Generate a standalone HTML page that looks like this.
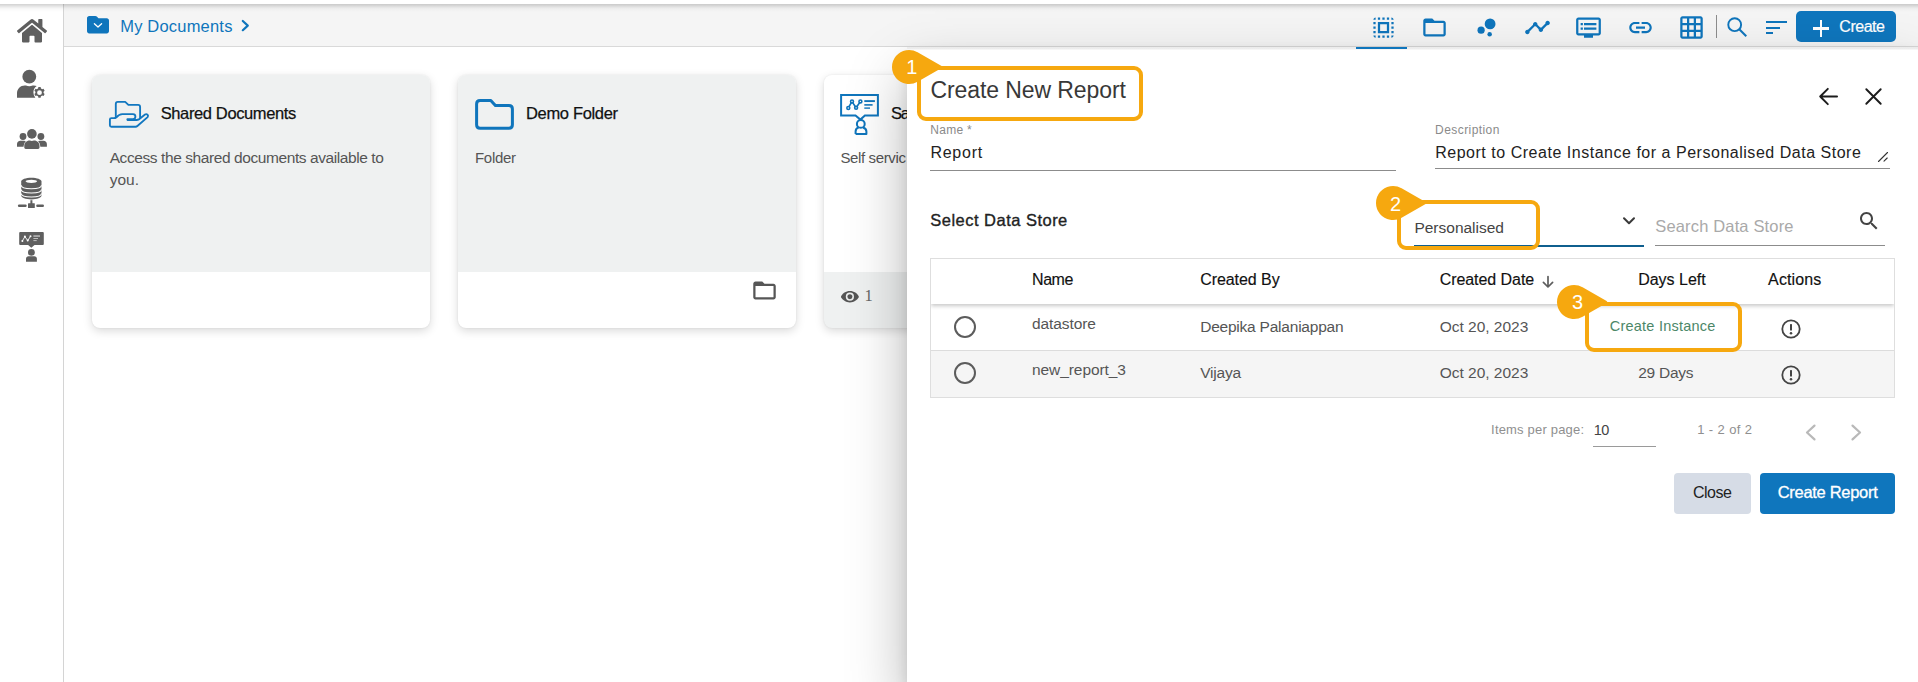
<!DOCTYPE html>
<html lang="en">
<head>
<meta charset="utf-8">
<title>My Documents - Create New Report</title>
<style>
*{box-sizing:border-box;margin:0;padding:0}
html,body{width:1918px;height:682px;overflow:hidden;background:#fff}
body{font-family:"Liberation Sans",sans-serif;color:#222;position:relative}
.abs{position:absolute}
svg{position:absolute;overflow:visible}
.t{position:absolute;white-space:pre;line-height:1}
#sidebar{position:absolute;left:0;top:4px;width:64px;height:678px;background:#fff;border-right:1px solid #d4d4d4}
#topbar{position:absolute;left:64px;top:4px;width:1854px;height:43px;background:#f5f5f5;border-bottom:1px solid #d9d9d9}
#toolbar{position:absolute;left:1346px;top:4px;width:572px;height:42px;background:linear-gradient(#f5f5f5 15%,#e9e9e9)}
#topshadow{position:absolute;left:0;top:4px;width:1918px;height:9px;background:linear-gradient(rgba(0,0,0,.165) 0,rgba(0,0,0,.16) .5px,rgba(0,0,0,.13) 1.5px,rgba(0,0,0,.094) 2.5px,rgba(0,0,0,.061) 3.5px,rgba(0,0,0,.037) 4.5px,rgba(0,0,0,.02) 5.5px,rgba(0,0,0,.012) 6.5px,rgba(0,0,0,.004) 7.5px,rgba(0,0,0,0) 9px)}
#tabline{position:absolute;left:1356px;top:46.700px;width:51px;height:2.300px;background:#0f75bc}
.card{position:absolute;top:75px;width:338px;height:253px;border-radius:8px;background:#fff;box-shadow:0 3px 10px rgba(0,0,0,.15),0 0 2px rgba(0,0,0,.08);overflow:hidden}
.card .top{position:absolute;left:0;top:0;width:100%;height:197px;background:#eff1f1}
.card.inv .top{background:#fff}
.card.inv{background:#eff1f1}
#panel{position:absolute;left:907px;top:47px;width:1011px;height:635px;background:#fff;box-shadow:0 28px 56px rgba(0,0,0,.29),0 6px 12px rgba(0,0,0,.1);clip-path:inset(-60px 0 0 -63px)}
.hl{position:absolute;border:4px solid #f6a80f;border-radius:9px}
.line{position:absolute;height:1px;background:#8c8c8c}
.btn{position:absolute;border-radius:4px;height:41px;top:473px}
#tbl{position:absolute;left:930px;top:258px;width:965px;height:140px;border:1px solid #dedede;background:#fff}
#thead{position:absolute;left:931px;top:259px;width:963px;height:45px;background:#fff;box-shadow:0 2px 4px rgba(0,0,0,.22);clip-path:inset(0 0 -12px 0)}
#row2{position:absolute;left:931px;top:351px;width:963px;height:46px;background:#f5f5f5}
#rowline{position:absolute;left:931px;top:350px;width:963px;height:1px;background:#dcdcdc}
.num{width:24px;text-align:center;font-size:20px;color:#fff}
.radio{position:absolute;width:22px;height:22px;border:2px solid #5c5c5c;border-radius:50%;background:transparent}
</style>
</head>
<body>
<div id="sidebar"></div>
<div id="topbar"></div>
<div id="topshadow"></div>
<svg style="left:0;top:0" width="64" height="280" viewBox="0 0 64 280" fill="#5f5f5f">
<!-- home -->
<g transform="translate(17,17.4) scale(0.0521)"><path d="M280.37 148.26L96 300.11V464a16 16 0 0 0 16 16l112.06-.29a16 16 0 0 0 15.92-16V368a16 16 0 0 1 16-16h64a16 16 0 0 1 16 16v95.64a16 16 0 0 0 16 16.050L464 480a16 16 0 0 0 16-16V300L295.670 148.260a12.190 12.190 0 0 0-15.300 0zM571.600 251.470L488 182.560V44.050a12 12 0 0 0-12-12h-56a12 12 0 0 0-12 12v72.610L318.470 43a48 48 0 0 0-61 0L4.340 251.470a12 12 0 0 0-1.600 16.900l25.500 31A12 12 0 0 0 45.150 301l235.220-193.740a12.190 12.190 0 0 1 15.300 0L530.900 301a12 12 0 0 0 16.900-1.600l25.500-31a12 12 0 0 0-1.700-16.930z"/></g>
<!-- user cog -->
<circle cx="29.3" cy="76.7" r="6.9"/>
<path d="M17 97.700v-4.500c0-4.400 3.400-7.800 7.800-7.800h1.200c1 .5 2.100 .8 3.300 .8s2.300-.3 3.300-.8h1.200c1 0 2 .2 2.900 .6a8 8 0 0 0-3.300 6.500 8 8 0 0 0 1.900 5.200z"/>
<g transform="translate(39.500,92.700)"><path fill-rule="evenodd" d="M-1.100-5.600h2.200l.35 1.450a4.300 4.300 0 0 1 1.150 .66l1.430-.42 1.100 1.900-1.080 1.030a4.300 4.300 0 0 1 0 1.320l1.080 1.030-1.100 1.900-1.430-.42a4.300 4.300 0 0 1-1.150 .66l-.35 1.450h-2.200l-.35-1.450a4.300 4.300 0 0 1-1.150-.66l-1.430 .42-1.100-1.900 1.080-1.030a4.300 4.300 0 0 1 0-1.320l-1.080-1.030 1.100-1.900 1.430 .42a4.300 4.300 0 0 1 1.150-.66zM0-2.400a2.400 2.400 0 1 0 0 4.800 2.400 2.400 0 0 0 0-4.800z"/></g>
<!-- users -->
<circle cx="31.900" cy="133.900" r="4.800"/><circle cx="23" cy="136.500" r="3.400"/><circle cx="40.900" cy="136.500" r="3.400"/>
<path d="M17 146.800v-2.600c0-1.900 1.500-3.400 3.400-3.400h3.700c.6 0 1.200 .2 1.700 .5a6.400 6.400 0 0 0-2.200 4.800v.7zM46.900 146.800v-2.600c0-1.900-1.500-3.400-3.400-3.400h-3.700c-.6 0-1.200 .2-1.700 .5a6.400 6.400 0 0 1 2.200 4.800v.7z"/>
<path d="M24.300 147.500v-1.700c0-3 2.300-5.300 5.300-5.300h.3c.6 .3 1.300 .5 2 .5s1.400-.2 2-.5h.3c3 0 5.300 2.300 5.300 5.300v1.700c0 .8-.6 1.400-1.400 1.400h-12.400c-.8 0-1.400-.6-1.400-1.400z"/>
<!-- database -->
<path d="M21.200 181.600c0-2.100 4.500-3.800 10.150-3.800s10.150 1.700 10.150 3.800v14c0 2.100-4.500 3.800-10.150 3.800s-10.150-1.700-10.150-3.800z"/>
<ellipse cx="31.350" cy="181.300" rx="5.800" ry="1.600" fill="#fff"/>
<g fill="none" stroke="#fff" stroke-width="1.100"><path d="M21.200 185.200c0 2.100 4.500 3.500 10.150 3.500s10.150-1.400 10.150-3.500"/><path d="M21.200 189.500c0 2.100 4.500 3.500 10.150 3.500s10.150-1.400 10.150-3.500"/><path d="M21.200 193.500c0 2.100 4.500 3.500 10.150 3.500s10.150-1.400 10.150-3.500"/></g>
<rect x="30.400" y="200.200" width="2" height="4" /><rect x="28" y="203.200" width="6.800" height="4.700" rx=".5"/>
<rect x="17.900" y="204.500" width="8.800" height="2.400" rx="1.200"/><rect x="36.200" y="204.500" width="7.800" height="2.400" rx="1.200"/>
<!-- presenter -->
<path d="M19.200 231.900h23.600a1 1 0 0 1 1 1v11a1 1 0 0 1-1 1h-8.300l-3.200 2.900-3.200-2.900h-7.900a1 1 0 0 1-1-1v-11a1 1 0 0 1 1-1z"/>
<g fill="none" stroke="#fff" stroke-width=".9"><path d="M22.400 240.900l2.500-4.300 2.800 4 2.800-4.300"/></g>
<g fill="#fff"><circle cx="22.400" cy="240.900" r="1"/><circle cx="24.900" cy="236.600" r="1"/><circle cx="27.700" cy="240.600" r="1"/><circle cx="30.500" cy="236.300" r="1"/></g>
<g fill="#bdbdbd"><rect x="33.400" y="235.300" width="6.600" height="1.500"/><rect x="33.400" y="238" width="4.600" height="1"/><rect x="33.400" y="240.100" width="3.300" height="1"/></g>
<circle cx="31.400" cy="252.400" r="3.400"/>
<path d="M26 261.800v-3c0-1.400 1.100-2.500 2.500-2.500h5.900c1.400 0 2.500 1.100 2.500 2.500v3z"/>
</svg>

<!-- breadcrumb folder -->
<svg style="left:87px;top:15.800px" width="22" height="17.400" viewBox="0 0 22 17.400"><path d="M2.200 0h6.100c.6 0 1.100 .2 1.500 .6l1.700 1.700h8.300c1.200 0 2.200 1 2.200 2.200v10.700c0 1.200-1 2.200-2.200 2.200H2.200c-1.200 0-2.200-1-2.200-2.200V2.200C0 1 1 0 2.200 0z" fill="#0f75bc"/><path d="M7.400 7.700l3.600 3.300 3.600-3.300" fill="none" stroke="#fff" stroke-width="1.300" stroke-linecap="round" stroke-linejoin="round"/></svg>
<svg style="left:240px;top:19px" width="11" height="14" viewBox="0 0 11 14" fill="none" stroke="#0f75bc" stroke-width="2.200" stroke-linecap="round" stroke-linejoin="round"><path d="M2.800 2l5 4.600-5 4.600"/></svg>
<!-- toolbar icons 27px -->
<svg style="left:1369.500px;top:14px" width="27" height="27" viewBox="0 0 24 24" fill="#0f75bc"><path d="M3 5h2V3c-1.100 0-2 .9-2 2zm0 8h2v-2H3v2zm4 8h2v-2H7v2zM3 9h2V7H3v2zm10-6h-2v2h2V3zm6 0v2h2c0-1.100-.9-2-2-2zM5 21v-2H3c0 1.100 .9 2 2 2zm-2-4h2v-2H3v2zM9 3H7v2h2V3zm2 18h2v-2h-2v2zm8-8h2v-2h-2v2zm0 8c1.100 0 2-.9 2-2h-2v2zm0-12h2V7h-2v2zm0 8h2v-2h-2v2zm-4 4h2v-2h-2v2zm0-16h2V3h-2v2zM7 17h10V7H7v10zm2-8h6v6H9V9z"/></svg>
<svg style="left:1421px;top:13.800px" width="27" height="27" viewBox="0 0 24 24" fill="#0f75bc"><path d="M20 6h-8l-2-2H4c-1.100 0-1.990 .9-1.990 2L2 18c0 1.100 .9 2 2 2h16c1.100 0 2-.9 2-2V8c0-1.100-.9-2-2-2zm0 12H4V8h16v10z"/></svg>
<svg style="left:1472.500px;top:13.800px" width="27" height="27" viewBox="0 0 24 24" fill="#0f75bc"><circle cx="7.200" cy="14.400" r="3.200"/><circle cx="14.800" cy="18" r="2"/><circle cx="15.200" cy="8.800" r="4.800"/></svg>
<svg style="left:1523.800px;top:13.800px" width="27" height="27" viewBox="0 0 24 24" fill="#0f75bc"><path d="M23 8c0 1.100-.9 2-2 2-.18 0-.35-.02-.51-.07l-3.560 3.550c.05 .16 .07 .34 .07 .52 0 1.100-.9 2-2 2s-2-.9-2-2c0-.18 .02-.36 .07-.52l-2.550-2.550c-.16 .05-.34 .07-.52 .07s-.36-.02-.52-.07l-4.550 4.560c.05 .16 .07 .33 .07 .51 0 1.100-.9 2-2 2s-2-.9-2-2 .9-2 2-2c.18 0 .35 .02 .51 .07l4.560-4.550C8.020 9.360 8 9.180 8 9c0-1.100 .9-2 2-2s2 .9 2 2c0 .18-.02 .36-.07 .52l2.550 2.550c.16-.05 .34-.07 .52-.07s.36 .02 .52 .07l3.550-3.560C19.020 8.350 19 8.180 19 8c0-1.100 .9-2 2-2s2 .9 2 2z"/></svg>
<svg style="left:1575.400px;top:13.800px" width="27" height="27" viewBox="0 0 24 24" fill="#0f75bc"><path d="M21 3H3c-1.100 0-2 .9-2 2v12c0 1.100 .9 2 2 2h5v2h8v-2h5c1.100 0 1.990-.9 1.990-2L23 5c0-1.100-.9-2-2-2zm0 14H3V5h18v12zm-2-9H8v2h11V8zm0 4H8v2h11v-2zM7 8H5v2h2V8zm0 4H5v2h2v-2z"/></svg>
<svg style="left:1626.800px;top:13.800px" width="27" height="27" viewBox="0 0 24 24" fill="#0f75bc"><path d="M3.900 12c0-1.710 1.390-3.100 3.100-3.100h4V7H7c-2.760 0-5 2.240-5 5s2.240 5 5 5h4v-1.900H7c-1.710 0-3.100-1.390-3.100-3.100zM8 13h8v-2H8v2zm9-6h-4v1.900h4c1.710 0 3.100 1.390 3.100 3.100s-1.390 3.100-3.100 3.100h-4V17h4c2.760 0 5-2.240 5-5s-2.240-5-5-5z"/></svg>
<svg style="left:1678.300px;top:14px" width="27" height="27" viewBox="0 0 24 24" fill="#0f75bc"><path d="M20 2H4c-1.100 0-2 .9-2 2v16c0 1.100 .9 2 2 2h16c1.100 0 2-.9 2-2V4c0-1.100-.9-2-2-2zM8 20H4v-4h4v4zm0-6H4v-4h4v4zm0-6H4V4h4v4zm6 12h-4v-4h4v4zm0-6h-4v-4h4v4zm0-6h-4V4h4v4zm6 12h-4v-4h4v4zm0-6h-4v-4h4v4zm0-6h-4V4h4v4z"/></svg>
<div class="abs" style="left:1716px;top:15px;width:1px;height:23px;background:#8d8d8d"></div>
<svg style="left:1723.800px;top:13.900px" width="27" height="27" viewBox="0 0 24 24" fill="none" stroke="#0f75bc"><circle cx="9.500" cy="9.500" r="5.700" stroke-width="1.700"/><path d="M13.800 13.800l6 6" stroke-width="1.800"/></svg>
<div class="abs" style="left:1766.400px;top:21px;width:20.800px;height:2px;background:#0f75bc"></div>
<div class="abs" style="left:1766.400px;top:26.500px;width:13.700px;height:2px;background:#0f75bc"></div>
<div class="abs" style="left:1766.400px;top:32px;width:6.900px;height:2px;background:#0f75bc"></div>
<div class="abs" style="left:1796px;top:11px;width:100px;height:31px;border-radius:5px;background:#0f76bd"></div>
<div class="abs" style="left:1812.900px;top:27px;width:16.500px;height:2.700px;background:#fff"></div>
<div class="abs" style="left:1819.800px;top:20.200px;width:2.700px;height:16.500px;background:#fff"></div>


<!-- cards -->
<div class="card" style="left:92px"><div class="top"></div></div>
<div class="card" style="left:458px"><div class="top"></div></div>
<div class="card inv" style="left:824px"><div class="top"></div></div>
<!-- card 1: shared documents (hand + folder) -->
<svg style="left:100px;top:92px" width="60" height="45" viewBox="0 0 60 45" fill="none" stroke="#1177c0" stroke-width="1.850" stroke-linecap="round" stroke-linejoin="round">
<path d="M15.800 24.800V11.900Q15.800 9.900 17.800 9.900H25.200L28.400 12.900H38.100Q40.100 12.900 40.100 14.900V25.400"/>
<path d="M14.900 26.100H11.400Q9.900 26.100 9.900 27.600V33.200Q9.900 34.700 11.400 34.700H35.600Q36.600 34.700 37.400 34L47.600 25.100Q48.600 23.900 47.500 22.700Q46.300 21.600 45 22.600L38.800 27.400Q37.800 28 36.600 28H27.600"/>
<path d="M14.900 26.100Q15.700 26.100 16.400 25.400Q19 22.100 22.300 22.100H33Q35.400 22.100 35.400 24.600Q35.400 27.200 33 27.200H27.400"/>
</svg>
<!-- card 2: folder -->
<svg style="left:466px;top:92px" width="60" height="45" viewBox="466 92 60 45" fill="none" stroke="#0f75bc" stroke-width="3" stroke-linejoin="round">
<path d="M480.100 100.400H490.800L495.400 105.600H508.900Q512.400 105.600 512.400 109.100V124.800Q512.400 128.300 508.900 128.300H480.100Q476.600 128.300 476.600 124.800V103.900Q476.600 100.400 480.100 100.400Z"/>
</svg>
<svg style="left:751px;top:276.500px" width="27" height="27" viewBox="0 0 24 24" fill="#565656"><path d="M20 6h-8l-2-2H4c-1.100 0-1.990 .9-1.990 2L2 18c0 1.100 .9 2 2 2h16c1.100 0 2-.9 2-2V8c0-1.100-.9-2-2-2zm0 12H4V8h16v10z"/></svg>
<!-- card 3: presenter -->
<svg style="left:830px;top:86px" width="60" height="60" viewBox="830 86 60 60" fill="none" stroke="#0f75bc" stroke-width="2" stroke-linejoin="miter">
<path d="M855.500 115.400H841.100V94.900H877.900V115.400H864.900L860.400 119.600Z"/>
<circle cx="860.800" cy="123.900" r="3.900"/>
<path d="M855.600 133.900V131.600C855.600 129.200 857.200 127.900 858.600 127.500M863 127.500C864.500 127.900 866.400 129.200 866.400 131.600V133.900H855.600" stroke-linejoin="round"/>
<g stroke-width="1.600"><path d="M848.900 106.900L851.400 102.500M852.700 102.600L855.400 106.700M856.800 106.700L859.700 102.500"/><circle cx="848.300" cy="108" r="1.450"/><circle cx="852" cy="101.400" r="1.450"/><circle cx="856.100" cy="107.800" r="1.450"/><circle cx="860.400" cy="101.400" r="1.450"/></g>
<path stroke-width="1.900" d="M864.300 101.100H874.900"/><path stroke-width="1.600" d="M864.300 104.900H872.600"/><path stroke-width="1.400" d="M864.300 108.100H870"/>
</svg>
<!-- eye -->
<svg style="left:840.500px;top:290.700px" width="17.800" height="11.400" viewBox="0 0 17.800 11.400"><path d="M8.900 0C4.800 0 1.500 2.500 .1 5.200a1.100 1.100 0 0 0 0 1c1.400 2.700 4.700 5.200 8.800 5.200s7.400-2.500 8.800-5.200a1.100 1.100 0 0 0 0-1C16.300 2.500 13 0 8.900 0z" fill="#555"/><circle cx="8.900" cy="5.700" r="4.100" fill="#eceeee"/><circle cx="8.900" cy="5.700" r="2.500" fill="#555"/></svg>

<span class="t" style="left:120.2px;top:17.5px;font-size:16.5px;color:#0f75bc;letter-spacing:0.197px">My Documents</span>
<span class="t" style="left:160.7px;top:105.2px;font-size:16.5px;color:#111;letter-spacing:-0.377px;-webkit-text-stroke:0.25px #111">Shared Documents</span>
<span class="t" style="left:109.7px;top:149.9px;font-size:15.5px;color:#555;letter-spacing:-0.415px">Access the shared documents available to</span>
<span class="t" style="left:109.7px;top:171.9px;font-size:15.5px;color:#555;letter-spacing:0.000px">you.</span>
<span class="t" style="left:526.0px;top:105.2px;font-size:16.5px;color:#111;letter-spacing:-0.338px;-webkit-text-stroke:0.25px #111">Demo Folder</span>
<span class="t" style="left:475.0px;top:150.3px;font-size:15px;color:#555;letter-spacing:-0.306px">Folder</span>
<span class="t" style="left:891.0px;top:105.2px;font-size:16.5px;color:#111;letter-spacing:-1.200px;-webkit-text-stroke:0.25px #111">Sa</span>
<span class="t" style="left:840.5px;top:150.3px;font-size:15px;color:#555;letter-spacing:-0.380px">Self servic</span>
<span class="t" style="left:864.4px;top:288.2px;font-size:16.5px;color:#666;letter-spacing:0.000px;font-family:'Liberation Serif',serif">1</span>
<span class="t" style="left:1839.3px;top:18.6px;font-size:16px;color:#fff;letter-spacing:-0.466px;-webkit-text-stroke:0.2px #fff">Create</span>

<div id="panel"></div>
<div class="abs" style="left:907px;top:47px;width:1011px;height:3px;background:linear-gradient(#ebebeb,#ededed 66%,#fff)"></div>
<div id="tabline"></div>
<!-- header actions -->
<svg style="left:1814.5px;top:83px" width="27" height="27" viewBox="0 0 24 24" fill="none" stroke="#1c1c1c" stroke-width="1.7" stroke-linecap="round" stroke-linejoin="round"><path d="M19.6 12H4.6M11.4 5.2L4.6 12l6.8 6.8"/></svg>
<svg style="left:1859.5px;top:83px" width="27" height="27" viewBox="0 0 24 24" fill="none" stroke="#1c1c1c" stroke-width="1.7" stroke-linecap="round"><path d="M5.6 5.6l12.8 12.8M18.4 5.6L5.6 18.4"/></svg>

<!-- form lines -->
<div class="line" style="left:930px;top:170px;width:466px"></div>
<div class="line" style="left:1435px;top:168px;width:455px"></div>
<svg style="left:1877px;top:151px" width="12" height="12" viewBox="0 0 12 12" fill="none" stroke="#333" stroke-width="1.1" stroke-linecap="round"><path d="M1.5 10.5L10.5 1.5M7 10.2L10.2 7"/></svg>

<!-- select + search -->
<div class="abs" style="left:1414px;top:245px;width:230px;height:2px;background:#0f5f8e"></div>
<svg style="left:1621.5px;top:214.5px" width="14" height="12" viewBox="0 0 14 12" fill="none" stroke="#3a3a3a" stroke-width="2" stroke-linecap="round" stroke-linejoin="round"><path d="M2 3.2l5 5 5-5"/></svg>
<div class="line" style="left:1655px;top:245px;width:230px"></div>
<svg style="left:1857.4px;top:209.2px" width="24" height="24" viewBox="0 0 24 24" fill="#444"><path d="M15.5 14h-.79l-.28-.27C15.41 12.59 16 11.11 16 9.5 16 5.91 13.09 3 9.5 3S3 5.91 3 9.5 5.91 16 9.5 16c1.61 0 3.09-.59 4.23-1.57l.27.28v.79l5 4.99L20.49 19l-4.99-5zm-6 0C7.01 14 5 11.99 5 9.5S7.01 5 9.5 5 14 7.01 14 9.5 11.99 14 9.5 14z"/></svg>

<!-- table -->
<div id="tbl"></div>
<div id="row2"></div>
<div id="rowline"></div>
<div id="thead"></div>
<div class="radio" style="left:953.8px;top:315.9px"></div>
<div class="radio" style="left:953.8px;top:362px"></div>
<svg style="left:1541px;top:274.800px" width="14" height="14" viewBox="0 0 14 14" fill="none" stroke="#5e5e5e" stroke-width="1.700" stroke-linecap="round" stroke-linejoin="round"><path d="M7 1.6v10.2M2.4 7.4L7 12l4.6-4.6"/></svg>
<svg style="left:1779.5px;top:317.6px" width="22" height="22" viewBox="0 0 22 22"><circle cx="11" cy="11" r="8.7" fill="none" stroke="#444" stroke-width="1.8"/><rect x="10" y="6" width="2" height="6.6" rx=".6" fill="#444"/><circle cx="11" cy="15.2" r="1.25" fill="#444"/></svg>
<svg style="left:1779.5px;top:363.5px" width="22" height="22" viewBox="0 0 22 22"><circle cx="11" cy="11" r="8.7" fill="none" stroke="#444" stroke-width="1.8"/><rect x="10" y="6" width="2" height="6.6" rx=".6" fill="#444"/><circle cx="11" cy="15.2" r="1.25" fill="#444"/></svg>

<!-- paginator -->
<div class="line" style="left:1593px;top:446px;width:63px;background:#9a9a9a"></div>
<svg style="left:1803px;top:423px" width="16" height="20" viewBox="0 0 16 20" fill="none" stroke="#b9b9b9" stroke-width="2.2" stroke-linecap="round" stroke-linejoin="round"><path d="M11.5 2.6L4 9.5l7.5 6.9"/></svg>
<svg style="left:1848px;top:423px" width="16" height="20" viewBox="0 0 16 20" fill="none" stroke="#b9b9b9" stroke-width="2.2" stroke-linecap="round" stroke-linejoin="round"><path d="M4.5 2.6L12 9.5l-7.5 6.9"/></svg>

<!-- buttons -->
<div class="btn" style="left:1674px;width:77px;background:#d6dce6"></div>
<div class="btn" style="left:1760px;width:135px;background:#0f76bd"></div>

<!-- highlights -->
<div class="hl" style="left:917px;top:66px;width:226px;height:55px"></div>
<div class="hl" style="left:1397px;top:200px;width:143px;height:50px"></div>
<div class="hl" style="left:1585px;top:302px;width:157px;height:50px"></div>
<svg style="left:908.5px;top:67px" width="1" height="1"><path d="M8.6 -14.66L32.6 -0.9Q34 0 32.6 0.9L8.6 14.66A17 17 0 1 1 8.6 -14.66Z" fill="#f6a80f"/></svg>
<svg style="left:1393px;top:203px" width="1" height="1"><path d="M8.6 -14.66L32.6 -0.9Q34 0 32.6 0.9L8.6 14.66A17 17 0 1 1 8.6 -14.66Z" fill="#f6a80f"/></svg>
<svg style="left:1574px;top:302px" width="1" height="1"><path d="M8.6 -14.66L32.6 -0.9Q34 0 32.6 0.9L8.6 14.66A17 17 0 1 1 8.6 -14.66Z" fill="#f6a80f"/></svg>
<span class="t num" style="left:899.7px;top:57.3px">1</span>
<span class="t num" style="left:1383.6px;top:193.6px">2</span>
<span class="t num" style="left:1365.5px;top:292.3px;left:1565.5px">3</span>

<span class="t" style="left:930.4px;top:79.2px;font-size:23px;color:#383838;letter-spacing:-0.085px">Create New Report</span>
<span class="t" style="left:930.3px;top:124.3px;font-size:12px;color:#8a8a8a;letter-spacing:0.277px">Name *</span>
<span class="t" style="left:930.4px;top:145.3px;font-size:16px;color:#222;letter-spacing:0.754px">Report</span>
<span class="t" style="left:1435.1px;top:124.1px;font-size:12px;color:#8a8a8a;letter-spacing:0.427px">Description</span>
<span class="t" style="left:1435.2px;top:144.8px;font-size:16px;color:#222;letter-spacing:0.521px">Report to Create Instance for a Personalised Data Store</span>
<span class="t" style="left:930.3px;top:211.9px;font-size:16.5px;color:#222;letter-spacing:0.479px;-webkit-text-stroke:0.35px #222">Select Data Store</span>
<span class="t" style="left:1414.4px;top:219.5px;font-size:15.5px;color:#444;letter-spacing:-0.001px">Personalised</span>
<span class="t" style="left:1655.3px;top:218.0px;font-size:16.5px;color:#a9a9a9;letter-spacing:0.153px">Search Data Store</span>
<span class="t" style="left:1032.1px;top:272.2px;font-size:16px;color:#111;letter-spacing:-0.496px;-webkit-text-stroke:0.15px #111">Name</span>
<span class="t" style="left:1200.2px;top:272.2px;font-size:16px;color:#111;letter-spacing:-0.061px;-webkit-text-stroke:0.15px #111">Created By</span>
<span class="t" style="left:1439.7px;top:272.4px;font-size:16px;color:#111;letter-spacing:-0.061px;-webkit-text-stroke:0.15px #111">Created Date</span>
<span class="t" style="left:1638.2px;top:272.4px;font-size:16px;color:#111;letter-spacing:-0.012px;-webkit-text-stroke:0.15px #111">Days Left</span>
<span class="t" style="left:1768.1px;top:272.4px;font-size:16px;color:#111;letter-spacing:0.122px;-webkit-text-stroke:0.15px #111">Actions</span>
<span class="t" style="left:1032.0px;top:315.9px;font-size:15.5px;color:#555;letter-spacing:-0.080px">datastore</span>
<span class="t" style="left:1200.2px;top:319.0px;font-size:15.5px;color:#555;letter-spacing:-0.221px">Deepika Palaniappan</span>
<span class="t" style="left:1439.7px;top:318.7px;font-size:15.5px;color:#555;letter-spacing:-0.015px">Oct 20, 2023</span>
<span class="t" style="left:1609.8px;top:319.2px;font-size:14.5px;color:#4c8768;letter-spacing:0.223px">Create Instance</span>
<span class="t" style="left:1032.0px;top:362.0px;font-size:15.5px;color:#555;letter-spacing:-0.072px">new_report_3</span>
<span class="t" style="left:1200.2px;top:364.6px;font-size:15.5px;color:#555;letter-spacing:-0.188px">Vijaya</span>
<span class="t" style="left:1439.7px;top:364.5px;font-size:15.5px;color:#555;letter-spacing:-0.015px">Oct 20, 2023</span>
<span class="t" style="left:1638.2px;top:364.5px;font-size:15.5px;color:#555;letter-spacing:-0.263px">29 Days</span>
<span class="t" style="left:1491.1px;top:423.4px;font-size:13px;color:#8f8f8f;letter-spacing:0.184px">Items per page:</span>
<span class="t" style="left:1593.7px;top:423.3px;font-size:14.5px;color:#444;letter-spacing:-0.441px">10</span>
<span class="t" style="left:1697.2px;top:423.4px;font-size:13px;color:#8f8f8f;letter-spacing:0.387px">1 - 2 of 2</span>
<span class="t" style="left:1692.9px;top:484.5px;font-size:16px;color:#222;letter-spacing:-0.452px">Close</span>
<span class="t" style="left:1777.7px;top:484.0px;font-size:16.5px;color:#fff;letter-spacing:-0.295px;-webkit-text-stroke:0.3px #fff">Create Report</span>
</body>
</html>
